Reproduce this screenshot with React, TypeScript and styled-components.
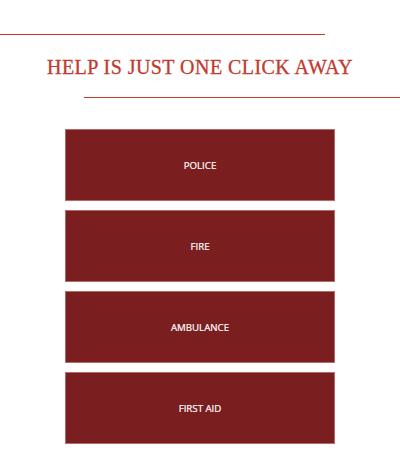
import React from "react";
import styled, { createGlobalStyle } from "styled-components";

const Global = createGlobalStyle`
  html, body { margin: 0; padding: 0; background: #ffffff; }
  body { font-family: "Open Sans", "Liberation Sans", sans-serif; }
`;

const Page = styled.div`
  width: 400px;
  display: flex;
  flex-direction: column;
  padding-top: 34px;
`;

const Rule = styled.div<{ $side: "left" | "right"; $width: number }>`
  height: 1px;
  width: ${(p) => p.$width}px;
  background: #c23a2e;
  align-self: ${(p) => (p.$side === "left" ? "flex-start" : "flex-end")};
`;

const Heading = styled.h1`
  margin: 0;
  padding: 20px 0 0;
  height: 42px;
  box-sizing: content-box;
  text-align: center;
  font-family: "Liberation Serif", "Times New Roman", serif;
  font-weight: normal;
  font-size: 20px;
  line-height: 24px;
  color: #c23a2e;
  letter-spacing: 0.45px;
  -webkit-text-stroke: 0.3px #c23a2e;
`;

const List = styled.div`
  display: flex;
  flex-direction: column;
  align-items: center;
  gap: 9px;
  margin-top: 31px;
`;

const Button = styled.button`
  width: 270px;
  height: 72px;
  box-sizing: border-box;
  background: #7b1e1f;
  border: 1px solid #b56a6a;
  color: #ffffff;
  font-family: "Open Sans", "Liberation Sans", sans-serif;
  font-size: 9.7px;
  font-weight: 400;
  -webkit-text-stroke: 0.2px #ffffff;
  padding: 0;
  cursor: pointer;
  display: flex;
  align-items: center;
  justify-content: center;
`;

const items = ["POLICE", "FIRE", "AMBULANCE", "FIRST AID"];

export default function App() {
  return (
    <>
      <Global />
      <Page>
        <Rule $side="left" $width={325} />
        <Heading>HELP IS JUST ONE CLICK AWAY</Heading>
        <Rule $side="right" $width={316} />
        <List>
          {items.map((t) => (
            <Button key={t}>{t}</Button>
          ))}
        </List>
      </Page>
    </>
  );
}
